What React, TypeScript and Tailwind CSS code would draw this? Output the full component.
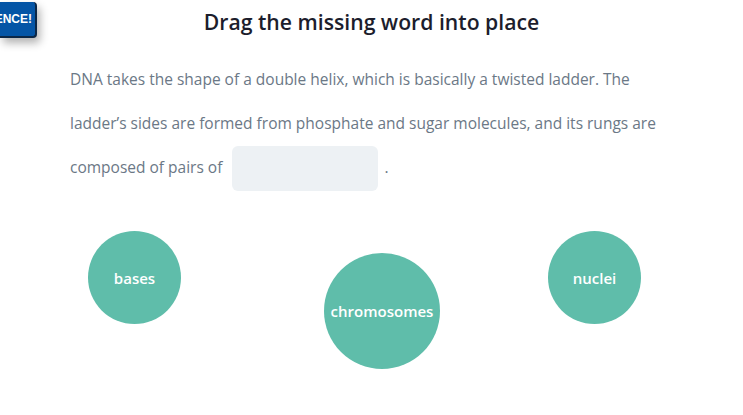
export default function App() {
  const font = { fontFamily: '"Open Sans", Lato, sans-serif' }
  return (
    <div className="relative w-[743px] h-[415px] bg-white overflow-hidden" style={font}>
      {/* cut-off badge at top left */}
      <div className="absolute left-0 top-[2px] h-[36px] w-[37px] bg-[#0455a6] rounded-r-[4px] border-r-2 border-b-2 border-[#0b2747] shadow-[3px_5px_8px_rgba(0,0,0,0.3)] overflow-hidden flex items-center justify-end pr-[3px]">
        <span className="whitespace-nowrap text-white text-[12px] font-bold" style={{ fontFamily: '"Liberation Sans", Arial, sans-serif' }}>
          SCIENCE!
        </span>
      </div>

      <h1 className="pt-[8px] text-center text-[21.2px] leading-[28px] font-semibold text-[#1c1d2c]">
        Drag the missing word into place
      </h1>

      <p className="mt-[21px] ml-[70px] w-[600px] text-[15.5px] leading-[44px] text-[#6b7886]">
        DNA takes the shape of a double helix, which is basically a twisted ladder. The ladder’s sides are formed from phosphate and sugar molecules, and its rungs are composed of pairs of{' '}
        <span className="inline-block align-middle w-[146px] h-[45px] mx-[6px] rounded-[6px] bg-[#edf1f4]" />.
      </p>

      <div className="flex items-start mt-[40px]">
        <div className="ml-[88px] w-[93px] h-[93px] rounded-full bg-[#5fbdaa] flex items-center justify-center text-white font-semibold text-[15px]">
          bases
        </div>
        <div className="ml-[143px] mt-[22px] w-[116px] h-[116px] rounded-full bg-[#5fbdaa] flex items-center justify-center text-white font-semibold text-[15px]">
          chromosomes
        </div>
        <div className="ml-[108px] w-[93px] h-[93px] rounded-full bg-[#5fbdaa] flex items-center justify-center text-white font-semibold text-[15px]">
          nuclei
        </div>
      </div>
    </div>
  )
}
